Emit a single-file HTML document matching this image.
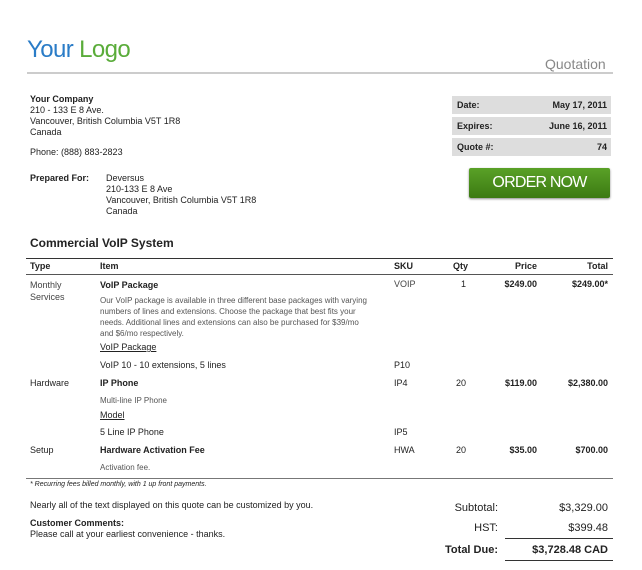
<!DOCTYPE html><html><head><style>
body{margin:0;width:642px;height:570px;background:#fff;position:relative;font-family:"Liberation Sans",Arial,sans-serif;color:#222;overflow:hidden}
div{position:absolute;white-space:nowrap;font-size:9px;line-height:11px}
.b{font-weight:bold}.r{text-align:right}.g{color:#555;font-size:8px}
.hr{background:#333;height:1px}
</style></head><body>
<div style="left:27px;top:36px;font-size:24px;line-height:28px;color:#2a7cc7;letter-spacing:-0.6px">Your <span style="color:#5aac3a">Logo</span></div>
<div style="left:27px;top:72px;width:586px;height:2px;background:#ccc"></div>
<div style="left:545px;top:56px;font-size:14px;line-height:16px;color:#888">Quotation</div>
<div style="left:30px;top:94px"><b>Your Company</b><br>210 - 133 E 8 Ave.<br>Vancouver, British Columbia V5T 1R8<br>Canada</div>
<div style="left:30px;top:147px">Phone: (888) 883-2823</div>
<div style="left:452px;top:96px;width:159px;height:18px;background:#ddd"></div>
<div style="left:452px;top:117px;width:159px;height:18px;background:#ddd"></div>
<div style="left:452px;top:138px;width:159px;height:18px;background:#ddd"></div>
<div class="b" style="left:457px;top:100px">Date:</div><div class="b r" style="left:500px;width:107px;top:100px">May 17, 2011</div>
<div class="b" style="left:457px;top:121px">Expires:</div><div class="b r" style="left:500px;width:107px;top:121px">June 16, 2011</div>
<div class="b" style="left:457px;top:142px">Quote #:</div><div class="b r" style="left:500px;width:107px;top:142px">74</div>
<div style="left:469px;top:168px;width:141px;height:30px;background:linear-gradient(#5aa127,#3c7a12);border-radius:2px;box-shadow:0 1px 2px #888;color:#fff;font-size:16px;line-height:30px;text-align:center;letter-spacing:-0.8px;transform-origin:center">ORDER NOW</div>
<div class="b" style="left:30px;top:173px">Prepared For:</div>
<div style="left:106px;top:173px">Deversus<br>210-133 E 8 Ave<br>Vancouver, British Columbia V5T 1R8<br>Canada</div>
<div class="b" style="left:30px;top:236px;font-size:12px;line-height:14px">Commercial VoIP System</div>
<div class="hr" style="left:26px;top:258px;width:587px"></div>
<div class="b" style="left:30px;top:261px">Type</div><div class="b" style="left:100px;top:261px">Item</div><div class="b" style="left:394px;top:261px">SKU</div><div class="b" style="left:453px;top:261px">Qty</div><div class="b r" style="left:480px;width:57px;top:261px">Price</div><div class="b r" style="left:540px;width:68px;top:261px">Total</div>
<div class="hr" style="left:26px;top:274px;width:587px;background:#555"></div>
<div style="left:30px;top:279px;line-height:12px;color:#444">Monthly<br>Services</div>
<div class="b" style="left:100px;top:280px">VoIP Package</div>
<div style="left:394px;top:279px;color:#444">VOIP</div><div style="left:461px;top:279px">1</div>
<div class="b r" style="left:480px;width:57px;top:279px">$249.00</div><div class="b r" style="left:540px;width:68px;top:279px">$249.00*</div>
<div class="g" style="left:100px;top:295px">Our VoIP package is available in three different base packages with varying<br>numbers of lines and extensions. Choose the package that best fits your<br>needs. Additional lines and extensions can also be purchased for $39/mo<br>and $6/mo respectively.</div>
<div style="left:100px;top:342px;text-decoration:underline">VoIP Package</div>
<div style="left:100px;top:360px">VoIP 10 - 10 extensions, 5 lines</div><div style="left:394px;top:360px">P10</div>
<div style="left:30px;top:378px">Hardware</div><div class="b" style="left:100px;top:378px">IP Phone</div><div style="left:394px;top:378px">IP4</div><div style="left:456px;top:378px">20</div>
<div class="b r" style="left:480px;width:57px;top:378px">$119.00</div><div class="b r" style="left:540px;width:68px;top:378px">$2,380.00</div>
<div class="g" style="left:100px;top:395px">Multi-line IP Phone</div>
<div style="left:100px;top:410px;text-decoration:underline">Model</div>
<div style="left:100px;top:427px">5 Line IP Phone</div><div style="left:394px;top:427px">IP5</div>
<div style="left:30px;top:445px">Setup</div><div class="b" style="left:100px;top:445px">Hardware Activation Fee</div><div style="left:394px;top:445px">HWA</div><div style="left:456px;top:445px">20</div>
<div class="b r" style="left:480px;width:57px;top:445px">$35.00</div><div class="b r" style="left:540px;width:68px;top:445px">$700.00</div>
<div class="g" style="left:100px;top:462px">Activation fee.</div>
<div class="hr" style="left:26px;top:478px;width:587px;background:#777"></div>
<div style="left:30px;top:479px;font-size:7px;font-style:italic">* Recurring fees billed monthly, with 1 up front payments.</div>
<div style="left:30px;top:500px">Nearly all of the text displayed on this quote can be customized by you.</div>
<div class="b" style="left:30px;top:518px">Customer Comments:</div>
<div style="left:30px;top:529px">Please call at your earliest convenience - thanks.</div>
<div class="r" style="left:400px;width:98px;top:502px;font-size:11px;line-height:13px">Subtotal:</div><div class="r" style="left:510px;width:98px;top:502px;font-size:11px;line-height:13px">$3,329.00</div>
<div class="r" style="left:400px;width:98px;top:522px;font-size:11px;line-height:13px">HST:</div><div class="r" style="left:510px;width:98px;top:522px;font-size:11px;line-height:13px">$399.48</div>
<div class="hr" style="left:505px;top:538px;width:108px"></div>
<div class="b r" style="left:400px;width:98px;top:544px;font-size:11px;line-height:13px">Total Due:</div><div class="b r" style="left:500px;width:108px;top:544px;font-size:11px;line-height:13px">$3,728.48 CAD</div>
<div class="hr" style="left:505px;top:560px;width:108px"></div>
</body></html>
